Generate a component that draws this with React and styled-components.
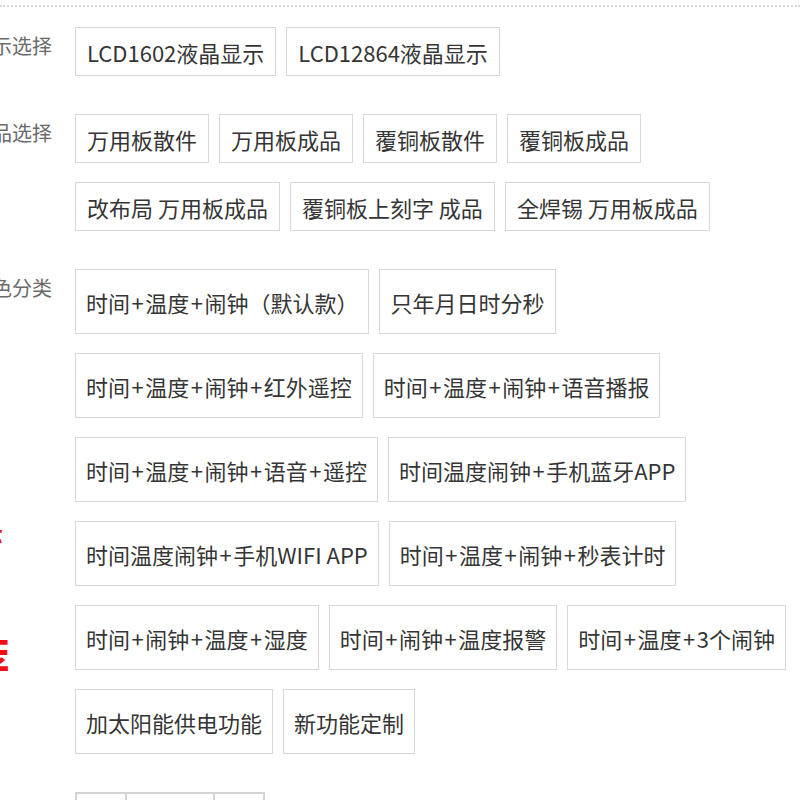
import styled, { createGlobalStyle } from 'styled-components';

const GlobalStyle = createGlobalStyle`
  body {
    margin: 0;
    background: #fff;
    font-family: "Noto Sans CJK SC", "Noto Sans", sans-serif;
    overflow: hidden;
  }
`

const Page = styled.div`
  width: 800px;
  height: 800px;
  overflow: hidden;
`

const Dotted = styled.div`
  margin-top: 5px;
  border-top: 2px dotted #d6d6d6;
`

const Sections = styled.div`
  display: flex;
  flex-direction: column;
  gap: 38px;
  padding-top: 20px;
`

const Section = styled.div`
  display: grid;
  grid-template-columns: 75px 1fr;
`

const LabelCell = styled.div`
  display: flex;
  flex-direction: column;
  align-items: flex-end;
  padding-right: 23px;
  padding-top: 8px;
`

const Label = styled.span`
  font-size: 20px;
  line-height: 22px;
  color: #6a6a6a;
  white-space: nowrap;
`

const RedNote = styled.span`
  color: #f01010;
  font-weight: bold;
  white-space: nowrap;
  font-size: ${p => p.$size}px;
  line-height: ${p => p.$size}px;
  margin-top: ${p => p.$top}px;
  margin-right: ${p => p.$right}px;
`

const Options = styled.div`
  display: flex;
  flex-wrap: wrap;
  align-content: flex-start;
  column-gap: 10px;
  row-gap: 19px;
  padding-right: 12px;
`

const Chip = styled.div`
  box-sizing: border-box;
  height: ${p => p.$tall ? '65px' : '49px'};
  display: flex;
  align-items: center;
  padding: 0 ${p => p.$tall ? '10px' : '11px'};
  border: 1px solid #d8d8d8;
  background: #fff;
  color: #353535;
  font-size: 22px;
  white-space: nowrap;
  cursor: pointer;
`

const Plus = styled.span`
  margin: 0 1.5px;
`

const Stepper = styled.div`
  display: flex;
  height: 40px;
`

const StepBox = styled.div`
  box-sizing: border-box;
  width: ${p => p.$w}px;
  height: 40px;
  border: 2px solid #d4d4d4;
  margin-left: ${p => p.$first ? '0' : '-2px'};
`

const sections = [
  { label: '显示选择', items: ['LCD1602液晶显示', 'LCD12864液晶显示'] },
  { label: '成品选择', items: ['万用板散件', '万用板成品', '覆铜板散件', '覆铜板成品', '改布局 万用板成品', '覆铜板上刻字 成品', '全焊锡 万用板成品'] },
]

const colours = [
  '时间+温度+闹钟（默认款）',
  '只年月日时分秒',
  '时间+温度+闹钟+红外遥控',
  '时间+温度+闹钟+语音播报',
  '时间+温度+闹钟+语音+遥控',
  '时间温度闹钟+手机蓝牙APP',
  '时间温度闹钟+手机WIFI APP',
  '时间+温度+闹钟+秒表计时',
  '时间+闹钟+温度+湿度',
  '时间+闹钟+温度报警',
  '时间+温度+3个闹钟',
  '加太阳能供电功能',
  '新功能定制',
]

// split on "+" so the plus signs get a little extra room like the reference
const withPlus = text => text.split('+').map((part, i) => (
  <span key={i}>{i > 0 && <Plus>+</Plus>}{part}</span>
))

const App = () => {
  return (
    <Page>
      <GlobalStyle />
      <Dotted />
      <Sections>
        {sections.map(s => (
          <Section key={s.label}>
            <LabelCell><Label>{s.label}</Label></LabelCell>
            <Options>
              {s.items.map(i => <Chip key={i}>{i}</Chip>)}
            </Options>
          </Section>
        ))}
        <Section>
          <LabelCell>
            <Label>颜色分类</Label>
            <RedNote $size={24} $top={222} $right={49}>提示</RedNote>
            <RedNote $size={46} $top={88} $right={42}>推荐</RedNote>
          </LabelCell>
          <Options>
            {colours.map(c => <Chip $tall key={c}>{withPlus(c)}</Chip>)}
          </Options>
        </Section>
        <Section>
          <LabelCell><Label>数量</Label></LabelCell>
          <Stepper>
            <StepBox $first $w={52} />
            <StepBox $w={90} />
            <StepBox $w={52} />
          </Stepper>
        </Section>
      </Sections>
    </Page>
  )
}

export default App
